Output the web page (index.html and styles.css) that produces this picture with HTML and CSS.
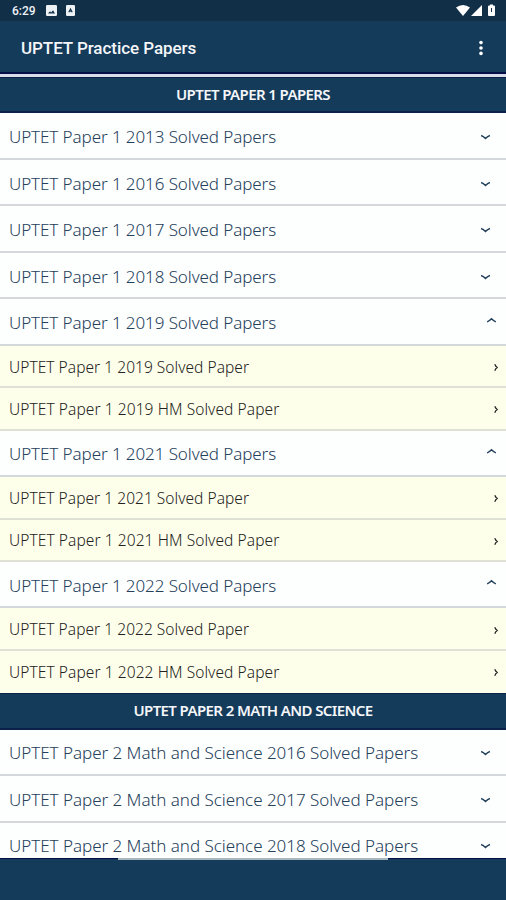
FILE: index.html
```html
<!DOCTYPE html>
<html lang="en">
<head>
<meta charset="utf-8">
<title>UPTET Practice Papers</title>
<link rel="stylesheet" href="styles.css">
</head>
<body>
<svg width="0" height="0" class="defs"><defs>
<symbol id="down" viewBox="0 0 10 6"><path d="M1 1.2Q3 1.8 5 3.9Q7 1.8 9 1.2" fill="none" stroke="currentColor" stroke-width="1.3"/></symbol>
<symbol id="up" viewBox="0 0 10 6"><path d="M1 4.2Q3 3.6 5 1.5Q7 3.6 9 4.2" fill="none" stroke="currentColor" stroke-width="1.3"/></symbol>
<symbol id="next" viewBox="0 0 6 8"><path d="M1.8 .8Q2.4 2.7 4.2 4Q2.4 5.3 1.8 7.2" fill="none" stroke="currentColor" stroke-width="1.2"/></symbol>
</defs></svg>
<div class="screen">
<div class="status">
<span class="clock">6:29</span>
<svg class="note" width="11" height="11" viewBox="0 0 11 11"><rect width="11" height="11" rx="1.2" fill="#eef2f5"/><path d="M2 8.5L4 6.3L5.2 7.4L7 5.2L9 8.5Z" fill="#12304a"/></svg>
<svg class="note2" width="9" height="11" viewBox="0 0 9 11"><rect width="9" height="11" rx="1.2" fill="#eef2f5"/><path d="M2.8 7.3L4.5 4L6.2 7.3M3.3 6.3H5.7" fill="none" stroke="#12304a" stroke-width="1.1"/></svg>
<svg class="signals" width="40" height="14" viewBox="0 0 40 14" fill="#fff"><path d="M0 3.6Q7 -1.6 14 3.6L7 12Z"/><path d="M26 1V12H15Z"/><path d="M33 1.5H34V.5H37V1.5H38Q39 1.5 39 2.5V11Q39 12 38 12H33Q32 12 32 11V2.5Q32 1.5 33 1.5Z"/><path d="M35 4H36V8H35Z" fill="#12304a"/></svg>
</div>
<header class="bar"><h1>UPTET Practice Papers</h1><svg width="6" height="16" viewBox="0 0 6 16" fill="#fff"><circle cx="3" cy="2.6" r="1.8"/><circle cx="3" cy="8" r="1.8"/><circle cx="3" cy="13.4" r="1.8"/></svg></header>
<main class="list">
<h2>UPTET PAPER 1 PAPERS</h2>
<div class="row"><span>UPTET Paper 1 2013 Solved Papers</span><svg><use href="#down"/></svg></div>
<div class="row"><span>UPTET Paper 1 2016 Solved Papers</span><svg><use href="#down"/></svg></div>
<div class="row"><span>UPTET Paper 1 2017 Solved Papers</span><svg><use href="#down"/></svg></div>
<div class="row"><span>UPTET Paper 1 2018 Solved Papers</span><svg><use href="#down"/></svg></div>
<div class="row open"><span>UPTET Paper 1 2019 Solved Papers</span><svg><use href="#up"/></svg></div>
<div class="sub"><span>UPTET Paper 1 2019 Solved Paper</span><svg><use href="#next"/></svg></div>
<div class="sub"><span class="hm">UPTET Paper 1 2019 HM Solved Paper</span><svg><use href="#next"/></svg></div>
<div class="row open"><span>UPTET Paper 1 2021 Solved Papers</span><svg><use href="#up"/></svg></div>
<div class="sub"><span>UPTET Paper 1 2021 Solved Paper</span><svg><use href="#next"/></svg></div>
<div class="sub"><span class="hm">UPTET Paper 1 2021 HM Solved Paper</span><svg><use href="#next"/></svg></div>
<div class="row open"><span>UPTET Paper 1 2022 Solved Papers</span><svg><use href="#up"/></svg></div>
<div class="sub"><span>UPTET Paper 1 2022 Solved Paper</span><svg><use href="#next"/></svg></div>
<div class="sub last"><span class="hm">UPTET Paper 1 2022 HM Solved Paper</span><svg><use href="#next"/></svg></div>
<h2>UPTET PAPER 2 MATH AND SCIENCE</h2>
<div class="row wide"><span>UPTET Paper 2 Math and Science 2016 Solved Papers</span><svg><use href="#down"/></svg></div>
<div class="row wide"><span>UPTET Paper 2 Math and Science 2017 Solved Papers</span><svg><use href="#down"/></svg></div>
<div class="row wide"><span>UPTET Paper 2 Math and Science 2018 Solved Papers</span><svg><use href="#down"/></svg></div>
</main>
<footer class="foot"><div class="strip"></div></footer>
</div>
</body>
</html>
```
FILE: styles.css
```css
* { box-sizing: border-box; }
body { margin: 0; font-family: "Noto Sans", "Open Sans", sans-serif; background: #153b5b; }
.defs { position: absolute; }
.screen { width: 506px; height: 900px; display: flex; flex-direction: column; overflow: hidden; }
.status { flex: none; height: 21px; background: #122f48; display: flex; align-items: center; padding: 0 10px 0 12px; }
.clock { font: 500 12px/21px Roboto, sans-serif; color: #eef2f5; width: 34px; padding-top: 1px; }
.note2 { margin-left: 9px; }
.signals { margin-left: auto; margin-top: 1px; }
.bar { flex: none; height: 53px; background: #153b5b; border-bottom: 2px solid #040f49; display: flex; align-items: center; justify-content: space-between; padding: 2px 22px 0 21px; }
.bar h1 { margin: 0; font: 500 17px/24px Roboto, sans-serif; color: #f4f6f9; letter-spacing: -.06px; }
.list { flex: none; height: 784px; overflow: hidden; background: #fdfefe; border-top: 3px solid #d9dce8; }
h2 { margin: 0; height: 36.4px; background: #153b5b; border-bottom: 2px solid #0b2149; border-top: 1px solid #0b2149; color: #f4f6f9; text-align: center; font-size: 15px; line-height: 33px; font-weight: 600; letter-spacing: -.6px; }
.row, .sub { display: flex; align-items: center; justify-content: space-between; white-space: nowrap; }
.row { height: 46.5px; padding: 2px 15px 0 9px; border-bottom: 2px solid #d5d8da; font-size: 17px; font-weight: 300; letter-spacing: -.09px; color: #24405a; }
.row.wide { letter-spacing: -.035px; }
.row svg { width: 11px; height: 7px; margin-top: 2px; }
.row.open { padding-right: 9px; }
.row.open svg { margin: 0 0 5px; }
.sub { height: 42.4px; padding: 1px 7px 0 9px; background: #feffea; border-bottom: 2px solid #dfe1d5; font-size: 15.5px; font-weight: 300; letter-spacing: .04px; color: #222; }
.sub .hm { letter-spacing: .08px; }
.sub svg { width: 6px; height: 9px; margin-top: 2px; }
.sub.last { border-bottom-color: #feffea; }
.foot { flex: 1; background: #153b5b; border-top: 1px solid #040f49; }
.strip { width: 270px; height: 2px; margin: -1px 0 0 118px; background: #a9b8bd; }
```
